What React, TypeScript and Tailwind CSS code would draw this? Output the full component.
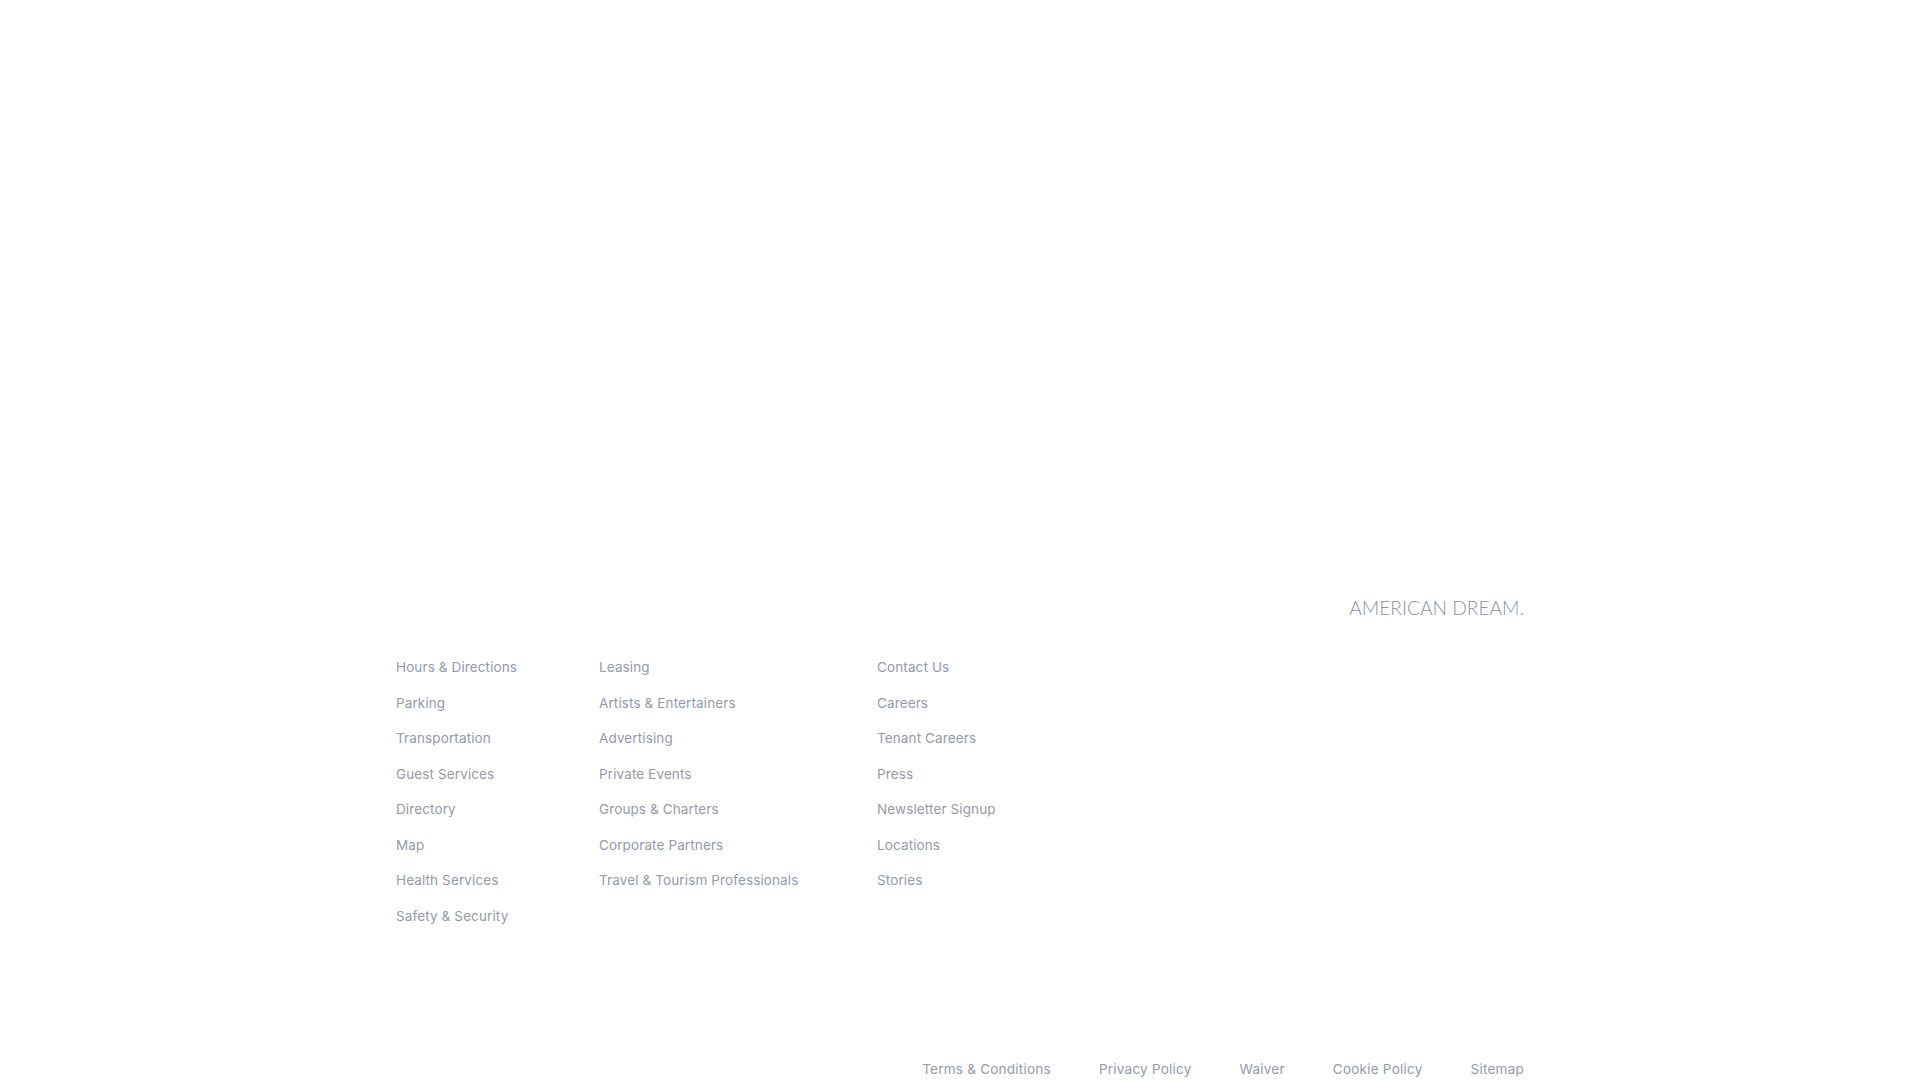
const columns = [
  ["Hours & Directions", "Parking", "Transportation", "Guest Services", "Directory", "Map", "Health Services", "Safety & Security"],
  ["Leasing", "Artists & Entertainers", "Advertising", "Private Events", "Groups & Charters", "Corporate Partners", "Travel & Tourism Professionals"],
  ["Contact Us", "Careers", "Tenant Careers", "Press", "Newsletter Signup", "Locations", "Stories"],
];

const legal = ["Terms & Conditions", "Privacy Policy", "Waiver", "Cookie Policy", "Sitemap"];

export default function App() {
  return (
    <footer className="min-h-screen bg-white flex flex-col justify-end font-['Inter',sans-serif] text-[13.5px] text-[#959aa5] leading-[20px]">
      <div className="w-[1128px] mx-auto">
        <div className="flex justify-end">
          <a href="#" className="font-['Lato',sans-serif] font-light text-[19.2px] leading-[24px] text-[#8b919d]">
            AMERICAN DREAM.
          </a>
        </div>

        <div className="mt-[37.5px] grid grid-cols-[203px_278px_auto] tracking-[0.12px]">
          {columns.map((links, i) => (
            <ul key={i} className="flex flex-col gap-[15.5px]">
              {links.map((link) => (
                <li key={link}>
                  <a href="#">{link}</a>
                </li>
              ))}
            </ul>
          ))}
        </div>

        <div className="mt-[133.5px] pb-[1px] flex justify-end gap-[48px] tracking-[0.24px]">
          {legal.map((link) => (
            <a key={link} href="#">
              {link}
            </a>
          ))}
        </div>
      </div>
    </footer>
  );
}
